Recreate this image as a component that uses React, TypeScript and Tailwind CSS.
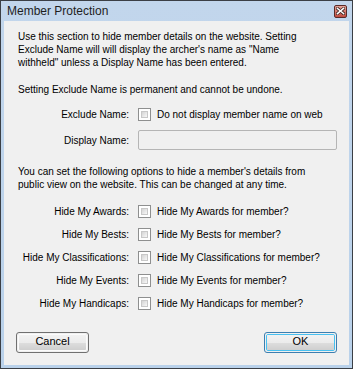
const hideOptions = [
  { label: "Hide My Awards:", text: "Hide My Awards for member?" },
  { label: "Hide My Bests:", text: "Hide My Bests for member?" },
  { label: "Hide My Classifications:", text: "Hide My Classifications for member?" },
  { label: "Hide My Events:", text: "Hide My Events for member?" },
  { label: "Hide My Handicaps:", text: "Hide My Handicaps for member?" },
];

function CheckBox() {
  return (
    <div className="w-[13px] h-[13px] shrink-0 border border-[#8e8f8f] bg-white p-[2px]">
      <div className="w-full h-full border border-[#c8c8c8] bg-gradient-to-br from-[#d4d4d4] to-[#f8f8f8]" />
    </div>
  );
}

function Row({ label, children }: { label: string; children: React.ReactNode }) {
  return (
    <div className="flex items-center h-[20px]">
      <div className="w-[111px] shrink-0 flex justify-end whitespace-nowrap">{label}</div>
      <div className="ml-[9px] flex items-center">{children}</div>
    </div>
  );
}

function WinButton({ label, isDefault }: { label: string; isDefault?: boolean }) {
  return (
    <div
      className={
        isDefault
          ? "w-[73px] h-[21px] rounded-[3px] border border-[#3c7fb1] p-px"
          : "w-[73px] h-[21px] rounded-[3px] border border-[#707070] p-px"
      }
    >
      <div
        className={
          isDefault
            ? "w-full h-full rounded-[2px] border border-[#48c0f0] flex flex-col overflow-hidden"
            : "w-full h-full rounded-[2px] border border-[#fbfbfb] flex flex-col overflow-hidden"
        }
      >
        <div className="flex-1 bg-gradient-to-b from-[#f2f2f2] to-[#ebebeb]" />
        <div className="flex-1 bg-gradient-to-b from-[#dddddd] to-[#cfcfcf]" />
      </div>
      <div className="relative -mt-[19px] h-[19px] flex items-center justify-center text-black text-[11px]">
        {label}
      </div>
    </div>
  );
}

export default function App() {
  return (
    <div
      className="w-[353px] h-[369px] border border-[#3b3f45] bg-gradient-to-b from-[#c2d6ec] to-[#b9d1ea] flex flex-col text-[10px] leading-[13px] text-black"
      style={{ fontFamily: '"Liberation Sans", Arial, sans-serif' }}
    >
      {/* title bar */}
      <div className="h-[20px] flex items-center pl-[6px] pr-[5px]">
        <div className="flex-1 text-[12px] text-[#1e1e1e]">Member Protection</div>
        <div className="w-[13px] h-[13px] rounded-[2px] border border-[#5b2a27] bg-gradient-to-b from-[#e4a49b] to-[#c04a3e] flex items-center justify-center">
          <svg width="9" height="8" viewBox="0 0 9 8">
            <path d="M1.5 1.5 L7.5 6.5 M7.5 1.5 L1.5 6.5" stroke="#3a1f1c" strokeWidth="3" strokeLinecap="square" />
            <path d="M1.5 1.5 L7.5 6.5 M7.5 1.5 L1.5 6.5" stroke="#ffffff" strokeWidth="1.6" strokeLinecap="square" />
          </svg>
        </div>
      </div>

      {/* client area */}
      <div className="flex-1 mx-[3px] mb-[3px] bg-[#f0f0f0] pl-[14px] pr-[12px] flex flex-col">
        <p className="mt-[9px] whitespace-nowrap">
          Use this section to hide member details on the website. Setting
          <br />
          Exclude Name will will display the archer's name as "Name
          <br />
          withheld" unless a Display Name has been entered.
        </p>
        <p className="mt-[14px]">Setting Exclude Name is permanent and cannot be undone.</p>

        <div className="mt-[8px]">
          <Row label="Exclude Name:">
            <CheckBox />
            <span className="ml-[6px] whitespace-nowrap">Do not display member name on web</span>
          </Row>
        </div>
        <div className="mt-[6px]">
          <Row label="Display Name:">
            <div className="w-[199px] h-[20px] rounded-[2px] border border-[#b5b5b5] bg-[#f0f0f0]" />
          </Row>
        </div>

        <p className="mt-[15px] whitespace-nowrap">
          You can set the following options to hide a member's details from
          <br />
          public view on the website. This can be changed at any time.
        </p>

        <div className="mt-[10px] flex flex-col gap-[3px]">
          {hideOptions.map((o) => (
            <Row key={o.label} label={o.label}>
              <CheckBox />
              <span className="ml-[6px] whitespace-nowrap">{o.text}</span>
            </Row>
          ))}
        </div>

        <div className="mt-[19px] flex justify-between">
          <div className="-ml-[2px]">
            <WinButton label="Cancel" />
          </div>
          <WinButton label="OK" isDefault />
        </div>
      </div>
    </div>
  );
}
